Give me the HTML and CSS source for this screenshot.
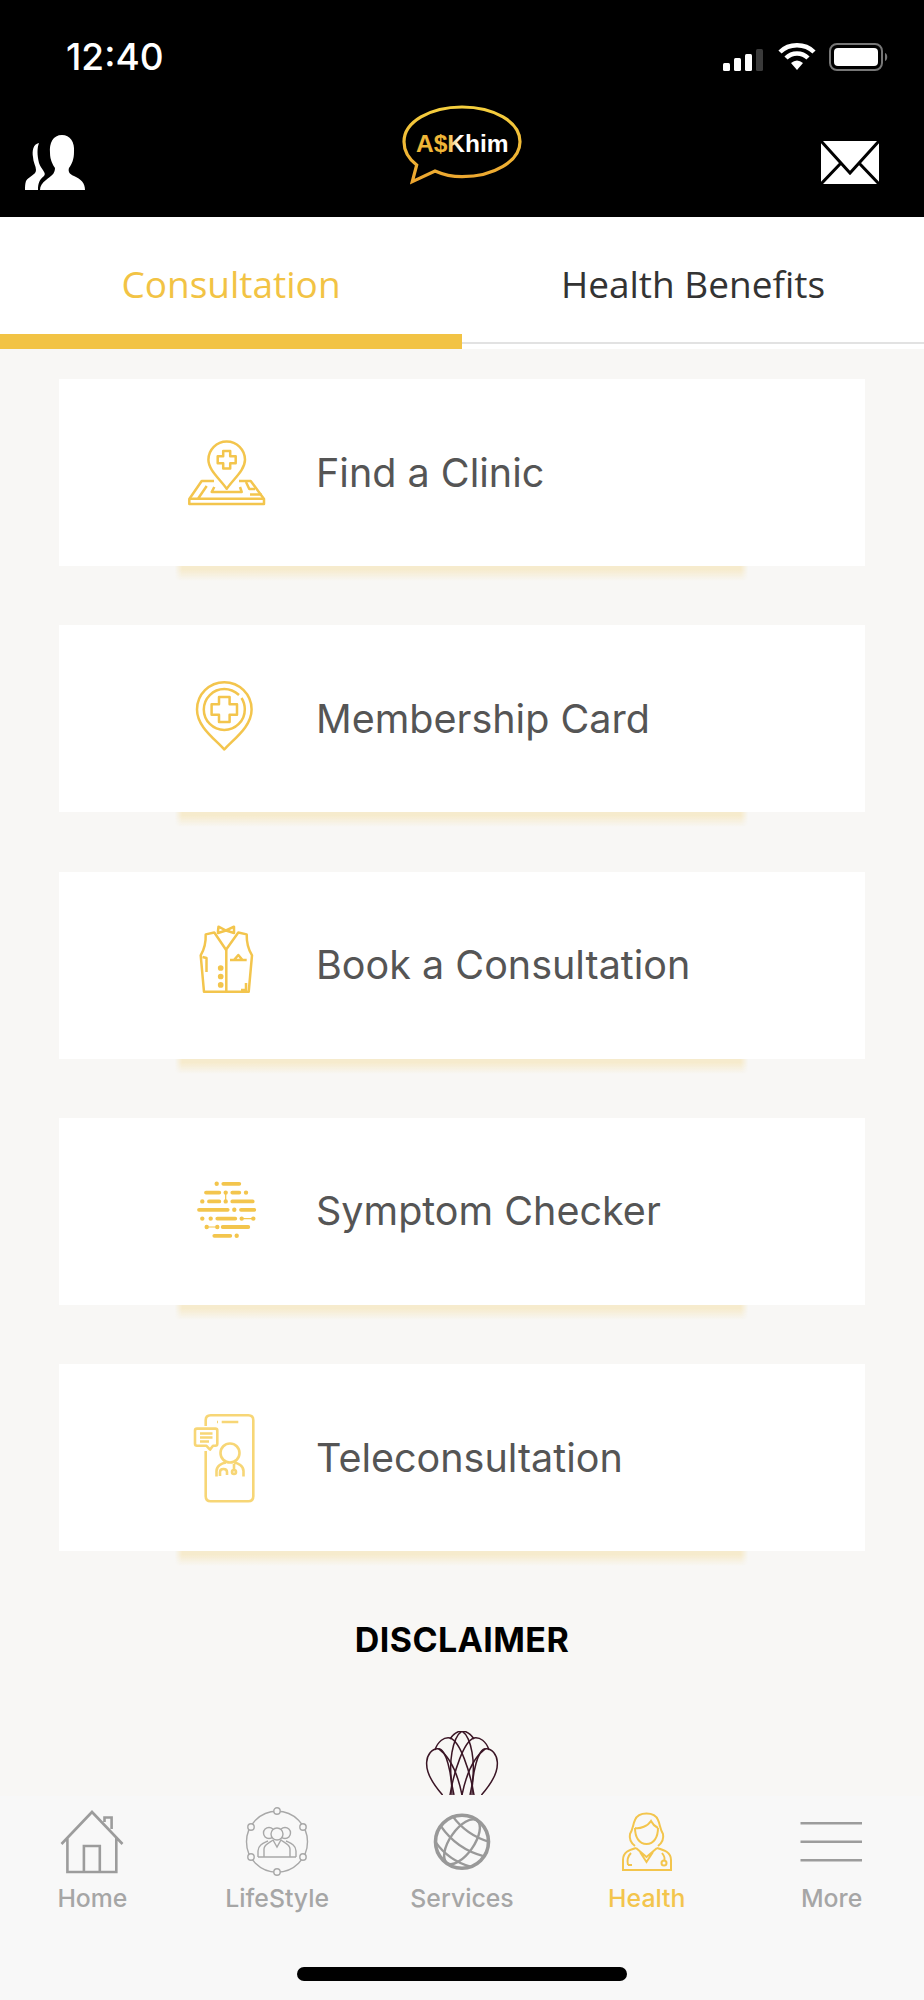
FILE: index.html
```html
<!DOCTYPE html>
<html lang="en">
<head>
    <meta charset="UTF-8">
    <meta name="viewport" content="width=device-width, initial-scale=1.0">
    <title>AskKhim Health</title>
    <link rel="stylesheet" href="styles.css">
</head>
<body>
<div class="app">

    <header class="header">
        <div class="statusbar">
            <span class="time">12:40</span>
            <div class="status-icons">
                <svg width="42" height="22" viewBox="0 0 42 22">
                    <rect x="0" y="14" width="7" height="8" rx="1.5" fill="#fff"/>
                    <rect x="11" y="9" width="7" height="13" rx="1.5" fill="#fff"/>
                    <rect x="22" y="5" width="7" height="17" rx="1.5" fill="#fff"/>
                    <rect x="33" y="0" width="7" height="22" rx="1.5" fill="#3a3a3a"/>
                </svg>
                <svg width="38" height="28" viewBox="0 0 38 28">
                    <path d="M2 9 C11 0 27 0 36 9" fill="none" stroke="#fff" stroke-width="4.5"/>
                    <path d="M8 15 C14 9 24 9 30 15" fill="none" stroke="#fff" stroke-width="4.5"/>
                    <path d="M13 20 Q19 15 25 20 L19 27 Z" fill="#fff"/>
                </svg>
                <svg width="60" height="28" viewBox="0 0 60 28">
                    <rect x="1" y="1" width="52" height="26" rx="7" fill="none" stroke="#777" stroke-width="2"/>
                    <rect x="5" y="5" width="44" height="18" rx="4" fill="#fff"/>
                    <path d="M56 10 C59 11 59 17 56 18 Z" fill="#777"/>
                </svg>
            </div>
        </div>
        <div class="topbar">
            <svg class="top-left" width="60" height="55" viewBox="0 0 60 55">
                <path d="M14 8 C8 9 7 16 8 22 C8 27 11 31 11 35 C11 40 4 41 1 46 C0 49 0 52 0 55 L13 55 C13 49 14 45 19 41 C22 38 16 34 14 28 C12 20 12 13 14 8 Z" fill="#fff"/>
                <path d="M37 0 C28 0 24 8 25 18 C25 25 28 30 30 33 C30 39 26 41 21 45 C17 48 15 51 15 55 L60 55 C60 48 56 44 49 41 C44 39 43 36 44 33 C47 29 49 24 49 17 C50 7 45 0 37 0 Z" fill="#fff"/>
            </svg>
            <svg class="logo" width="160" height="100" viewBox="0 0 160 100">
                <defs>
                    <linearGradient id="gold" x1="0" y1="0" x2="0" y2="1">
                        <stop offset="0" stop-color="#f5cf3e"/>
                        <stop offset="1" stop-color="#eca52f"/>
                    </linearGradient>
                    <linearGradient id="word" gradientUnits="userSpaceOnUse" x1="66" y1="0" x2="78" y2="0">
                        <stop offset="0" stop-color="#f0b637"/>
                        <stop offset="1" stop-color="#fff"/>
                    </linearGradient>
                </defs>
                <path d="M34.7 75 L30.3 91.7 L53 81 C62 85 70 86.7 80 86.7 C112 86.7 138 71 138 51.7 C138 32 112 17 80 17 C48 17 22 32 22 51.7 C22 61 27 69 34.7 75 Z" fill="none" stroke="url(#gold)" stroke-width="3.2"/>
                <text class="logo-text" x="34" y="61.5" fill="url(#word)">A$Khim</text>
            </svg>
            <svg class="top-right" width="58" height="55" viewBox="0 0 58 55">
                <rect x="0" y="6" width="58" height="43" fill="#fff"/>
                <path d="M0 6 L29 38 L58 6 M0 49 L20 28 M58 49 L38 28" fill="none" stroke="#000" stroke-width="3"/>
            </svg>
        </div>
    </header>

    <nav class="tabs">
        <div class="tab active">Consultation</div>
        <div class="tab">Health Benefits</div>
    </nav>

    <main class="main">
        <div class="card">
            <div class="card-icon">
                <svg width="100" height="100" viewBox="0 0 100 100" class="line-icon">
                    <path d="M49.7 65.8 C43 56 31.4 47 31.4 36.8 C31.4 26.7 39.6 18.5 49.7 18.5 C59.8 18.5 68 26.7 68 36.8 C68 47 56.4 56 49.7 65.8 Z"/>
                    <path d="M46.2 28 H53.2 V33.3 H58.7 V40.3 H53.2 V45.6 H46.2 V40.3 H40.7 V33.3 H46.2 Z"/>
                    <path d="M37 58 H24.7 L12.3 76 V81 H87 V76 L73.7 58 H62"/>
                    <path d="M12.5 75.8 H87 M29.7 63 L21 75.8 M37.3 64 L34.7 69 H64.7 L63 64 M69 59 L72.3 66 H78 M73 71.5 H84.7"/>
                </svg>
            </div>
            <span class="card-title">Find a Clinic</span>
        </div>
        <div class="card">
            <div class="card-icon">
                <svg width="100" height="100" viewBox="0 0 100 100" class="line-icon">
                    <path d="M47.3 80.5 C38 70 20 58 20 40.5 C20 25.4 32.2 13.2 47.3 13.2 C62.4 13.2 74.6 25.4 74.6 40.5 C74.6 58 56.6 70 47.3 80.5 Z"/>
                    <path d="M62 26 C57.5 22 53 20 47.3 20 C36 20 26.8 29.2 26.8 40.5 C26.8 51.8 36 61 47.3 61 C58.6 61 67.8 51.8 67.8 40.5 C67.8 36 66.5 32 64.5 29"/>
                    <path d="M42 28 H52.6 V35.2 H60 V45.8 H52.6 V53 H42 V45.8 H34.6 V35.2 H42 Z"/>
                </svg>
            </div>
            <span class="card-title">Membership Card</span>
        </div>
        <div class="card">
            <div class="card-icon">
                <svg width="100" height="100" viewBox="0 0 100 100" class="line-icon">
                    <path d="M28.7 19.4 L37.3 17.5 L49 34.7 L61.3 17.5 L69.7 19.4 C69.5 28 71 34 75 40.4 L71.7 76.8 H27 L23.7 40.4 C27.5 34 29 28 28.7 19.4 Z"/>
                    <path d="M49.3 34.7 V76.8 M41 16 L41.5 11.7 L49 15.5 L57 11.7 L57 18 L49 15.5 L41 18 Z"/>
                    <path d="M53 45 H69.7 M57 45 L61.3 40 L65.5 45"/>
                    <path d="M25.5 42 L29.5 43 L29.5 55 M29.5 50 L29.5 57 M64 75 H69 V68"/>
                    <circle cx="43.7" cy="53" r="1.6" class="solid"/>
                    <circle cx="43.7" cy="61.5" r="1.6" class="solid"/>
                    <circle cx="43.7" cy="69.9" r="1.6" class="solid"/>
                </svg>
            </div>
            <span class="card-title">Book a Consultation</span>
        </div>
        <div class="card">
            <div class="card-icon">
                <svg width="100" height="100" viewBox="0 0 100 100" class="dash-icon">
                    <path d="M46.3 22.8 H62.3 M29 31.6 H42.3 M55.3 31.6 H62.3 M32 40.4 H42.3 M55.3 40.4 H75.7 M22 48.8 H50.7 M64 48.8 H77.3 M40.3 57.6 H58.3 M45.7 66 H71.3 M37.3 74.8 H53.3"/>
                    <path class="thin" d="M48.7 31.6 V40.4 M64.7 57.6 H76.3 M29.7 66 H40.3"/>
                    <path class="dots" d="M39.7 22.8 h0 M48.7 31.6 h0 M69 31.6 h0 M25.3 40.4 h0 M48.7 40.4 h0 M57.3 48.8 h0 M25.3 57.6 h0 M33.7 57.6 h0 M64.7 57.6 h0 M76.3 57.6 h0 M29.7 66 h0 M40.3 66 h0 M59.7 74.8 h0"/>
                </svg>
            </div>
            <span class="card-title">Symptom Checker</span>
        </div>
        <div class="card">
            <div class="card-icon">
                <svg width="100" height="100" viewBox="0 0 100 100" class="line-icon soft">
                    <path d="M28.7 18 V12.2 Q28.7 7.2 33.7 7.2 H71.3 Q76.3 7.2 76.3 12.2 V88.3 Q76.3 93.3 71.3 93.3 H33.7 Q28.7 93.3 28.7 88.3 V43"/>
                    <path d="M44.7 14 H61.3 M40 14 H41"/>
                    <path d="M20 20.6 H38.3 Q40.3 20.6 40.3 22.6 V35.8 Q40.3 37.8 38.3 37.8 H36 L33 41.6 L29.5 37.8 H20 Q18 37.8 18 35.8 V22.6 Q18 20.6 20 20.6 Z"/>
                    <path d="M23 25.5 H35.5 M23 29.5 H35.5 M23 33.5 H32"/>
                    <circle cx="53" cy="45" r="9.5"/>
                    <path d="M39.5 68.5 V63 C39.5 58 45 55 49 54.5 M66.5 68.5 V63 C66.5 58 61 55 57 54.5 M43 68 V64 C43 60 50 60 50 64 V67 M57 56 V62"/>
                    <circle cx="57" cy="64" r="2"/>
                </svg>
            </div>
            <span class="card-title">Teleconsultation</span>
        </div>

        <div class="disclaimer">DISCLAIMER</div>

        <svg class="lotus" width="80" height="64" viewBox="0 0 80 64">
            <path d="M20.6 64 C10 52 4 40 4.7 31 C5 24 10 17 16.5 17.7 C24 18 30 42 30 64"/>
            <path d="M13 19 C16 10 22 6 28 7 C38 10 48 40 52 64"/>
            <path d="M28 8 C32 2 36 0 40 0"/>
            <path d="M40 0 C32 5 24 30 32 64"/>
            <path d="M16.5 17.7 C28 26 36 44 40 64"/>
            <g transform="matrix(-1 0 0 1 80 0)">
                <path d="M20.6 64 C10 52 4 40 4.7 31 C5 24 10 17 16.5 17.7 C24 18 30 42 30 64"/>
                <path d="M13 19 C16 10 22 6 28 7 C38 10 48 40 52 64"/>
                <path d="M28 8 C32 2 36 0 40 0"/>
                <path d="M40 0 C32 5 24 30 32 64"/>
                <path d="M16.5 17.7 C28 26 36 44 40 64"/>
            </g>
        </svg>
    </main>

    <footer class="tabbar">
        <div class="tabbar-items">
            <div class="tabbar-item">
                <svg width="70" height="70" viewBox="0 0 70 70" class="nav-icon">
                    <path d="M4.5 37 L35 5 L65.5 37 M10.4 31 V65 H59.3 V31 M26.9 65 V39 H42.8 V65 M47.5 15 V10.5 H54.6 V22"/>
                </svg>
                <span>Home</span>
            </div>
            <div class="tabbar-item">
                <svg width="70" height="70" viewBox="0 0 70 70" class="nav-icon thin-icon">
                    <circle cx="35" cy="34.7" r="30.5"/>
                    <circle class="node" cx="35" cy="4" r="3.2"/>
                    <circle class="node" cx="61" cy="20" r="3.2"/>
                    <circle class="node" cx="61" cy="50" r="3.2"/>
                    <circle class="node" cx="35" cy="65" r="3.2"/>
                    <circle class="node" cx="9" cy="50" r="3.2"/>
                    <circle class="node" cx="9" cy="20" r="3.2"/>
                    <circle cx="27" cy="26" r="5.5"/>
                    <circle cx="43" cy="26" r="5.5"/>
                    <circle class="node" cx="35" cy="27" r="6"/>
                    <path d="M16 50 V44 C16 38 22 36 26 34 M54 50 V44 C54 38 48 36 44 34 M22 50 V42 C22 37 29 35 31 33 M48 50 V42 C48 37 41 35 39 33 L35 40 L31 33 M16 50 H54"/>
                </svg>
                <span>LifeStyle</span>
            </div>
            <div class="tabbar-item">
                <svg width="70" height="70" viewBox="0 0 70 70" class="nav-icon globe">
                    <circle cx="35" cy="34.7" r="26.5"/>
                    <g transform="rotate(35 35 34.7)" class="globe-grid">
                        <ellipse cx="35" cy="34.7" rx="12" ry="26"/>
                        <path d="M12 19 Q35 27 58 19 M8.5 34 Q35 44 61.5 34 M13 50 Q35 58 57 50"/>
                    </g>
                </svg>
                <span>Services</span>
            </div>
            <div class="tabbar-item active">
                <svg width="70" height="70" viewBox="0 0 70 70" class="nav-icon health">
                    <path d="M23 39 C19 36 17 32 18 27 C21 22 21 17 23 13 C25 8 30 6.5 34.5 6.5 C39 6.5 44 8 46 13 C48 17 48 22 51 27 C52 32 50 36 46 39"/>
                    <path d="M23 21 C28 22 36 19 39 14 C41 18 44 20 46 21 M23 21 C23 30 27 37 34.5 37 C42 37 46 30 46 21"/>
                    <path d="M24 41 C17 43 11 45 11 53 V63 H59 V53 C59 45 52 43 45 41 M24 41 L34.5 50 L45 41 M28 45 L34.5 55 L41 45"/>
                    <path d="M19 46 C15 50 15 54 16 58 M50 46 C53 50 53 52 52 53 M16 58 H20"/>
                    <circle cx="52" cy="56" r="2.5"/>
                </svg>
                <span>Health</span>
            </div>
            <div class="tabbar-item">
                <svg width="70" height="70" viewBox="0 0 70 70" class="nav-icon">
                    <path d="M3.5 16.3 H65 M3.5 34.7 H65 M3.5 53.3 H65"/>
                </svg>
                <span>More</span>
            </div>
        </div>
        <div class="home-indicator"></div>
    </footer>

</div>
</body>
</html>
```

FILE: styles.css
```css
/* Page frame */
body {
    margin: 0;
    padding: 0;
    font-family: Inter, "Liberation Sans", sans-serif;
    background-color: #f8f7f5;
}
.app {
    height: 2000px;
    display: flex;
    flex-direction: column;
    overflow: hidden;
}

/* Black header */
.header {
    height: 217px;
    background-color: #000;
    color: #fff;
}
.statusbar {
    height: 90px;
    display: flex;
    justify-content: space-between;
    padding: 0 35px 0 66px;
}
.time {
    font-size: 37px;
    font-weight: 500;
    line-height: 40px;
    margin-top: 37px;
}
.status-icons {
    display: flex;
    align-items: flex-end;
    gap: 13px;
    height: 71px;
}
.status-icons svg {
    display: block;
}
.topbar {
    display: grid;
    grid-template-columns: 1fr auto 1fr;
    align-items: end;
    padding: 0 45px;
}
.top-left {
    margin-left: -20px;
}
.top-right {
    justify-self: end;
}
.logo-text {
    font-family: "Liberation Sans", Arial, sans-serif;
    font-size: 24.5px;
    font-weight: bold;
}

/* Tabs */
.tabs {
    display: flex;
    height: 132px;
    background-color: #fff;
    align-items: flex-start;
}
.tab {
    flex: 1;
    box-sizing: border-box;
    height: 127px;
    padding-top: 44px;
    text-align: center;
    font-family: "Open Sans", sans-serif;
    font-size: 37px;
    line-height: 46px;
    color: #333;
    border-bottom: 2px solid #e2e2e2;
}
.tab.active {
    height: 132px;
    color: #f2c344;
    border-bottom: 15px solid #f2c344;
}

/* Menu cards */
.main {
    flex: 1;
    min-height: 0;
    overflow: hidden;
    padding: 30px 59px 0;
    display: flex;
    flex-direction: column;
    gap: 59.3px;
}
.card {
    position: relative;
    height: 187px;
    flex-shrink: 0;
    background-color: #fff;
    display: flex;
    align-items: center;
    padding-left: 118px;
    gap: 39px;
}
.card::after {
    content: "";
    position: absolute;
    left: 116px;
    right: 117px;
    top: 100%;
    height: 15px;
    background: linear-gradient(#f6ebcd 25%, rgba(246, 235, 205, 0));
    -webkit-mask-image: linear-gradient(to right, transparent, #000 7px, #000 calc(100% - 7px), transparent);
    mask-image: linear-gradient(to right, transparent, #000 7px, #000 calc(100% - 7px), transparent);
}
.card-icon {
    width: 100px;
    height: 100px;
}
.card-icon svg {
    display: block;
}
.card-title {
    font-size: 39.5px;
    color: #555;
}
.line-icon {
    fill: none;
    stroke: #f3c54d;
    stroke-width: 2.5;
    stroke-linejoin: round;
}
.line-icon.soft {
    stroke: #f7d676;
    stroke-width: 2.6;
}
.line-icon .solid {
    fill: #f3c54d;
}
.dash-icon {
    fill: none;
    stroke: #f3c54d;
    stroke-width: 3.8;
    stroke-linecap: round;
}
.dash-icon .thin {
    stroke-width: 1.2;
}
.dash-icon .dots {
    stroke-width: 4.4;
}

.disclaimer {
    margin-top: 12px;
    text-align: center;
    font-size: 34px;
    font-weight: 700;
    line-height: 36px;
    letter-spacing: 0.4px;
    color: #000;
}
.lotus {
    align-self: center;
    flex-shrink: 0;
    margin-top: 13px;
    fill: none;
    stroke: #3a1525;
    stroke-width: 1.5;
}

/* Bottom navigation */
.tabbar {
    height: 204px;
    flex-shrink: 0;
    background-color: #f8f8f8;
    display: flex;
    flex-direction: column;
    justify-content: space-between;
    padding-bottom: 19px;
    box-sizing: border-box;
}
.tabbar-items {
    display: flex;
    padding-top: 11px;
}
.tabbar-item {
    flex: 1;
    display: flex;
    flex-direction: column;
    align-items: center;
    font-size: 24.8px;
    font-weight: 500;
    line-height: 30px;
    color: #a6a6a6;
}
.tabbar-item span {
    margin-top: 6px;
}
.tabbar-item.active {
    color: #f3c54d;
}
.nav-icon {
    fill: none;
    stroke: #9c9c9c;
    stroke-width: 2.6;
}
.thin-icon {
    stroke-width: 1.4;
    stroke: #a8a8a8;
}
.thin-icon .node {
    fill: #f8f8f8;
}
.globe {
    stroke-width: 3.6;
    stroke: #999;
}
.globe-grid {
    stroke-width: 2.4;
}
.health {
    stroke: #f3c54d;
    stroke-width: 2;
}
.home-indicator {
    align-self: center;
    width: 330px;
    height: 14px;
    border-radius: 7px;
    background-color: #000;
}
```
